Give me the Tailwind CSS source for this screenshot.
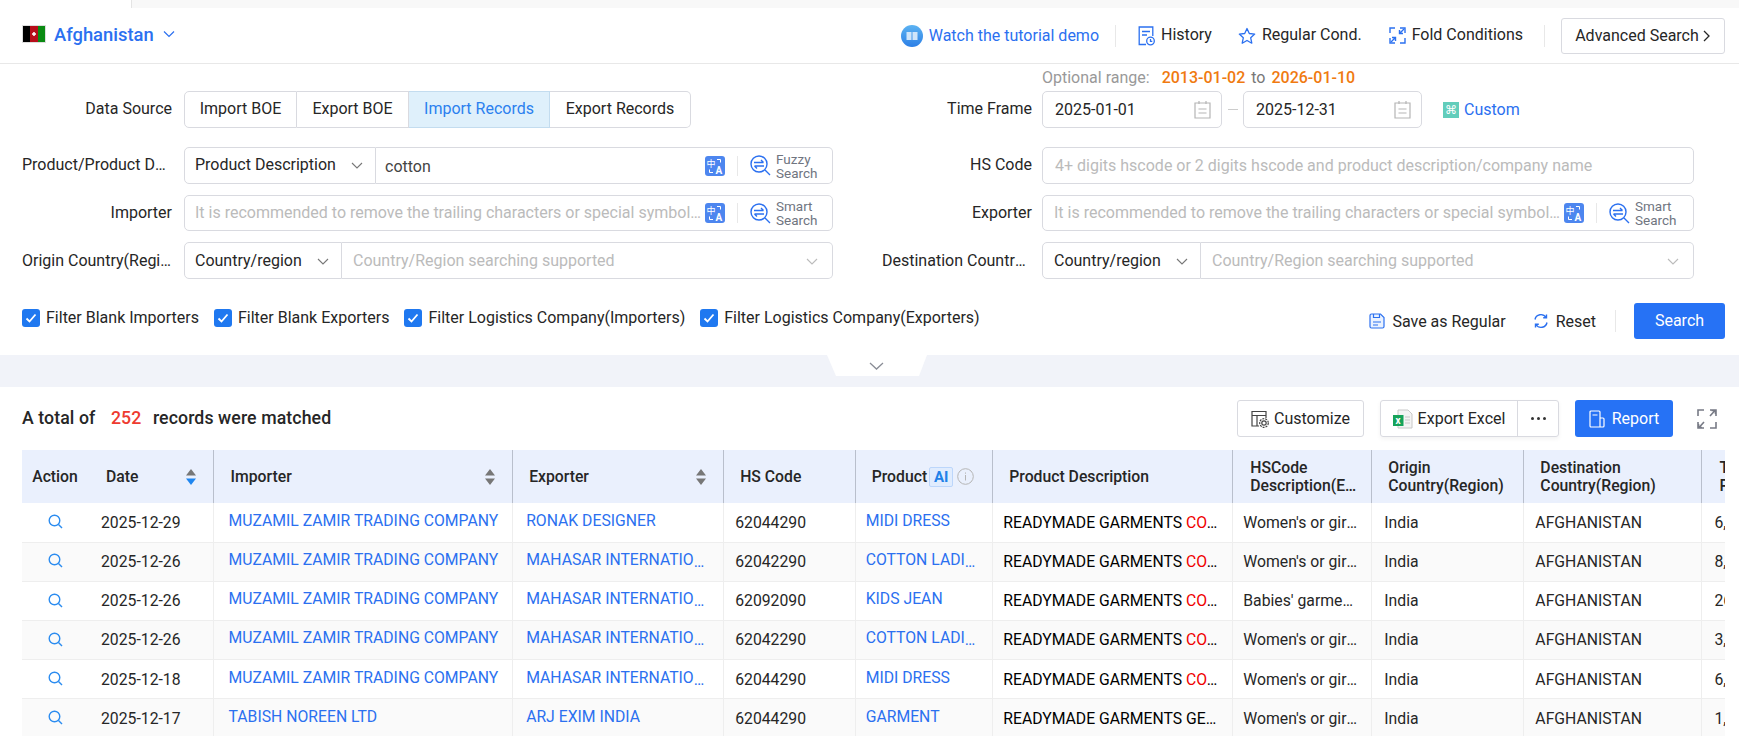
<!DOCTYPE html>
<html lang="en">

<head>
  <meta charset="UTF-8" />
  <meta name="viewport" content="width=device-width, initial-scale=1.0" />
  <script src="https://cdn.jsdelivr.net/npm/@tailwindcss/browser@4"></script>
  <title>Afghanistan trade data search</title>
</head>

<body class="bg-white">
  <div class="w-[1739px] h-[736px] overflow-hidden font-['Roboto',sans-serif] text-[16px] text-[#262626]">

    <!-- top strip -->
    <div class="h-2 flex">
      <div class="w-[132px] border-r border-[#e4e4e4]"></div>
      <div class="flex-1 bg-[#f8f8f8]"></div>
    </div>

    <!-- country + top actions -->
    <div class="h-[56px] flex items-center justify-between pl-[22px] pr-[14px] border-b border-[#e8e8e8]">
      <div class="flex items-center -translate-y-px">
        <svg width="24" height="18" viewBox="0 0 24 18" class="mr-[8px]">
          <rect width="8" height="18" fill="#000" />
          <rect x="8" width="8" height="18" fill="#b70d1a" />
          <rect x="16" width="8" height="18" fill="#0a8a12" />
          <path d="M12 7v4M10 9h4" stroke="#fff" stroke-width="1.500" />
          <rect x=".5" y=".5" width="23" height="17" fill="none" stroke="#ddd" />
        </svg>
        <span class="text-[#2b70f0] text-[18.400px] font-medium">Afghanistan</span>
        <svg width="14" height="14" viewBox="0 0 14 14" class="ml-[8px]" fill="none" stroke="#2b70f0" stroke-width="1.2">
          <path d="M2 4.5l5 5 5-5" />
        </svg>
      </div>
      <div class="flex items-center">
        <svg width="22" height="22" viewBox="0 0 22 22" class="mr-[6px]">
          <defs><linearGradient id="tut" x1="0" y1="0" x2="0" y2="1"><stop offset="0" stop-color="#5cb3f2" /><stop offset="1" stop-color="#2c7fe6" /></linearGradient></defs>
          <circle cx="11" cy="11" r="11" fill="url(#tut)" />
          <path d="M5.500 7h5v8h-5zM11.500 7h5v8h-5z" fill="#cfe5fa" />
        </svg>
        <span class="text-[#2b70f0]">Watch the tutorial demo</span>
        <div class="w-px h-[22px] bg-[#e8e8e8] ml-4 mr-[22px]"></div>
        <svg width="17" height="20" viewBox="0 0 17 20" fill="none" stroke="#2b70f0" stroke-width="1.3" class="mr-[6px]">
          <path d="M8 18.5H1.2V1h13.6v9" />
          <path d="M4 5.5h8M4 9h5" />
          <circle cx="12.5" cy="15" r="3.8" />
          <path d="M12.5 13v2.3h1.8" />
        </svg>
        <span class="-translate-y-px">History</span>
        <svg width="18" height="18" viewBox="0 0 18 18" fill="none" stroke="#2b70f0" stroke-width="1.3" stroke-linejoin="round" class="ml-[26px] mr-[6px]">
          <path d="M9 1.5l2.3 5 5.4.6-4 3.7 1.1 5.4L9 13.5l-4.8 2.7 1.1-5.4-4-3.7 5.4-.6z" />
        </svg>
        <span class="-translate-y-px">Regular Cond.</span>
        <svg width="17" height="17" viewBox="0 0 17 17" fill="none" stroke="#2b70f0" stroke-width="1.4" class="ml-[27px] mr-[6px]">
          <path d="M6 1H1v5M11 16h5v-5M1 11v5h5M16 6V1h-5" />
          <path d="M15 2l-4.5 4.5M10.5 3v3.5H14M2 15l4.5-4.5M6.5 14v-3.5H3" />
        </svg>
        <span class="-translate-y-px">Fold Conditions</span>
        <div class="w-px h-[22px] bg-[#e8e8e8] ml-[21px] mr-4"></div>
        <button class="w-[164px] h-[36px] border border-[#d9dae0] rounded-[3px] flex items-center justify-center gap-[3px]">
          Advanced Search
          <svg width="9" height="12" viewBox="0 0 9 12" fill="none" stroke="#262626" stroke-width="1.3">
            <path d="M2 1l5 5-5 5" />
          </svg>
        </button>
      </div>
    </div>

    <!-- optional range -->
    <div class="h-[27px] pl-[1042px] flex items-center text-[#999]">
      Optional range:<span class="text-[#f07a10] ml-[12px] font-medium">2013-01-02</span><span class="mx-[6px] text-[#777]">to</span><span class="text-[#f07a10] font-medium">2026-01-10</span>
    </div>

    <!-- filter rows -->
    <div class="pl-[22px] grid grid-cols-[162px_649px_209px_652px] grid-rows-[45px_37px_36px_37px] gap-y-[11px]">
      <div class="h-[37px] pb-[2px] flex items-center justify-end pr-3">Data Source</div>
      <div class="h-[37px] flex">
        <div class="w-[113px] pb-[2px] border border-[#d9dae0] rounded-l-[5px] flex items-center justify-center">Import BOE</div>
        <div class="w-[112px] pb-[2px] border-y border-r border-[#d9dae0] flex items-center justify-center">Export BOE</div>
        <div class="w-[141px] pb-[2px] border-y border-r border-[#c3dcef] bg-[#dff0fb] text-[#2b80ef] flex items-center justify-center">Import Records</div>
        <div class="w-[141px] pb-[2px] border-y border-r border-[#d9dae0] rounded-r-[5px] flex items-center justify-center">Export Records</div>
      </div>
      <div class="h-[37px] pb-[1px] flex items-center justify-end pr-[10px]">Time Frame</div>
      <div class="h-[37px] flex items-center">
        <div class="w-[180px] h-full border border-[#d9dae0] rounded-[5px] flex items-center justify-between pl-3 pr-[10px]">
          2025-01-01
          <svg width="17" height="19" viewBox="0 0 17 19" fill="none" stroke="#b5b5b5" stroke-width="1.2"><path d="M1 3h15v15H1zM5 1v3M12 1v3M4.5 9h8M4.5 13h8" /></svg>
        </div>
        <div class="w-[21px] flex justify-center"><div class="w-[10px] h-px bg-[#ccc]"></div></div>
        <div class="w-[179px] h-full border border-[#d9dae0] rounded-[5px] flex items-center justify-between pl-3 pr-[10px]">
          2025-12-31
          <svg width="17" height="19" viewBox="0 0 17 19" fill="none" stroke="#b5b5b5" stroke-width="1.2"><path d="M1 3h15v15H1zM5 1v3M12 1v3M4.5 9h8M4.5 13h8" /></svg>
        </div>
        <div class="ml-[21px] w-4 h-4 bg-[#62cdbb] text-white text-[12px] leading-4 text-center font-['DejaVu_Sans',sans-serif]">⌘</div>
        <span class="ml-[5px] text-[#2b70f0]">Custom</span>
      </div>

      <div class="pb-[2px] flex items-center justify-end pr-3"><span class="w-[150px] truncate text-right">Product/Product Description</span></div>
      <div class="flex">
        <div class="w-[192px] pb-[2px] border border-[#d9dae0] rounded-l-[5px] flex items-center justify-between pl-[10px] pr-[12px]">
          Product Description
          <svg width="12" height="12" viewBox="0 0 12 12" fill="none" stroke="#777" stroke-width="1.1"><path d="M1 4l5 5 5-5" /></svg>
        </div>
        <div class="flex-1 border-y border-r border-[#d9dae0] rounded-r-[5px] flex items-center">
          <span class="pl-[9px] flex-1 text-[#444] translate-y-px">cotton</span>
          <svg width="20" height="20" viewBox="0 0 20 20"><rect width="20" height="20" rx="3" fill="#4d86ef" /><text x="1.500" y="10.500" font-size="9" fill="#fff" font-family="Noto Sans CJK SC">中</text><text x="10.500" y="18" font-size="10" font-weight="700" fill="#fff" font-family="Roboto">A</text><path d="M12 3.500h3.500v3M8 16.500H4.500v-3" fill="none" stroke="#fff" /></svg>
          <div class="w-px h-[20px] bg-[#e8e8e8] mx-[12px]"></div>
          <svg width="21" height="21" viewBox="0 0 21 21" fill="none" stroke="#2b70f0" stroke-width="1.4"><circle cx="9" cy="9" r="8" /><path d="M15 15l5 5M4 7.500h9.500M4.500 11H14M11 5l2.500 2.500M7 13.500L4.500 11" /></svg>
          <span class="w-[61px] pl-[5px] text-[13.500px] leading-[14px] text-[#70757f]">Fuzzy Search</span>
        </div>
      </div>
      <div class="pb-[2px] flex items-center justify-end pr-[10px]">HS Code</div>
      <div class="border border-[#d9dae0] rounded-[5px] flex items-center pl-3 text-[#bbb]">4+ digits hscode or 2 digits hscode and product description/company name</div>

      <div class="flex items-center justify-end pr-3">Importer</div>
      <div class="border border-[#d9dae0] rounded-[5px] flex items-center">
        <span class="pl-[10px] pr-[4px] w-[520px] truncate text-[#bbb]">It is recommended to remove the trailing characters or special symbols from the name</span>
        <svg width="20" height="20" viewBox="0 0 20 20"><rect width="20" height="20" rx="3" fill="#4d86ef" /><text x="1.500" y="10.500" font-size="9" fill="#fff" font-family="Noto Sans CJK SC">中</text><text x="10.500" y="18" font-size="10" font-weight="700" fill="#fff" font-family="Roboto">A</text><path d="M12 3.500h3.500v3M8 16.500H4.500v-3" fill="none" stroke="#fff" /></svg>
        <div class="w-px h-[20px] bg-[#e8e8e8] mx-[12px]"></div>
        <svg width="21" height="21" viewBox="0 0 21 21" fill="none" stroke="#2b70f0" stroke-width="1.4"><circle cx="9" cy="9" r="8" /><path d="M15 15l5 5M4 7.500h9.500M4.500 11H14M11 5l2.500 2.500M7 13.500L4.500 11" /></svg>
        <span class="w-[61px] pl-[5px] text-[13.500px] leading-[14px] text-[#70757f]">Smart Search</span>
      </div>
      <div class="flex items-center justify-end pr-[10px]">Exporter</div>
      <div class="border border-[#d9dae0] rounded-[5px] flex items-center">
        <span class="pl-[11px] pr-[4px] w-[521px] truncate text-[#bbb]">It is recommended to remove the trailing characters or special symbols from the name</span>
        <svg width="20" height="20" viewBox="0 0 20 20"><rect width="20" height="20" rx="3" fill="#4d86ef" /><text x="1.500" y="10.500" font-size="9" fill="#fff" font-family="Noto Sans CJK SC">中</text><text x="10.500" y="18" font-size="10" font-weight="700" fill="#fff" font-family="Roboto">A</text><path d="M12 3.500h3.500v3M8 16.500H4.500v-3" fill="none" stroke="#fff" /></svg>
        <div class="w-px h-[20px] bg-[#e8e8e8] mx-[12px]"></div>
        <svg width="21" height="21" viewBox="0 0 21 21" fill="none" stroke="#2b70f0" stroke-width="1.4"><circle cx="9" cy="9" r="8" /><path d="M15 15l5 5M4 7.500h9.500M4.500 11H14M11 5l2.500 2.500M7 13.500L4.500 11" /></svg>
        <span class="w-[62px] pl-[5px] text-[13.500px] leading-[14px] text-[#70757f]">Smart Search</span>
      </div>

      <div class="flex items-center justify-end pr-3"><span class="w-[150px] truncate text-right">Origin Country(Region)</span></div>
      <div class="flex">
        <div class="w-[158px] border border-[#d9dae0] rounded-l-[5px] flex items-center justify-between pl-[10px] pr-[12px]">
          Country/region
          <svg width="12" height="12" viewBox="0 0 12 12" fill="none" stroke="#777" stroke-width="1.1"><path d="M1 4l5 5 5-5" /></svg>
        </div>
        <div class="flex-1 border-y border-r border-[#d9dae0] rounded-r-[5px] flex items-center justify-between pl-[11px] pr-[14px] text-[#bbb]">
          Country/Region searching supported
          <svg width="12" height="12" viewBox="0 0 12 12" fill="none" stroke="#bbb" stroke-width="1.1"><path d="M1 4l5 5 5-5" /></svg>
        </div>
      </div>
      <div class="flex items-center justify-end pr-[10px]"><span class="w-[150px] truncate text-right">Destination Country(Region)</span></div>
      <div class="flex">
        <div class="w-[159px] border border-[#d9dae0] rounded-l-[5px] flex items-center justify-between pl-[11px] pr-[12px]">
          Country/region
          <svg width="12" height="12" viewBox="0 0 12 12" fill="none" stroke="#777" stroke-width="1.1"><path d="M1 4l5 5 5-5" /></svg>
        </div>
        <div class="flex-1 border-y border-r border-[#d9dae0] rounded-r-[5px] flex items-center justify-between pl-[11px] pr-[14px] text-[#bbb]">
          Country/Region searching supported
          <svg width="12" height="12" viewBox="0 0 12 12" fill="none" stroke="#bbb" stroke-width="1.1"><path d="M1 4l5 5 5-5" /></svg>
        </div>
      </div>
    </div>

    <!-- checkboxes + search -->
    <div class="mt-[24px] h-[36px] pl-[22px] pr-[14px] flex justify-between">
      <div class="flex h-[30px] items-center gap-[15px]">
        <label class="flex items-center gap-[6px]"><span class="w-[18px] h-[18px] rounded-[3px] bg-[#1f78f0] flex items-center justify-center"><svg width="12" height="12" viewBox="0 0 12 12" fill="none" stroke="#fff" stroke-width="1.8"><path d="M1.5 6.5l3 3 6-7" /></svg></span>Filter Blank Importers</label>
        <label class="flex items-center gap-[6px]"><span class="w-[18px] h-[18px] rounded-[3px] bg-[#1f78f0] flex items-center justify-center"><svg width="12" height="12" viewBox="0 0 12 12" fill="none" stroke="#fff" stroke-width="1.8"><path d="M1.5 6.5l3 3 6-7" /></svg></span>Filter Blank Exporters</label>
        <label class="flex items-center gap-[6px]"><span class="w-[18px] h-[18px] rounded-[3px] bg-[#1f78f0] flex items-center justify-center"><svg width="12" height="12" viewBox="0 0 12 12" fill="none" stroke="#fff" stroke-width="1.8"><path d="M1.5 6.5l3 3 6-7" /></svg></span>Filter Logistics Company(Importers)</label>
        <label class="flex items-center gap-[6px]"><span class="w-[18px] h-[18px] rounded-[3px] bg-[#1f78f0] flex items-center justify-center"><svg width="12" height="12" viewBox="0 0 12 12" fill="none" stroke="#fff" stroke-width="1.8"><path d="M1.5 6.5l3 3 6-7" /></svg></span>Filter Logistics Company(Exporters)</label>
      </div>
      <div class="flex items-center">
        <svg width="16" height="16" viewBox="0 0 16 16" fill="none" stroke="#2b70f0" stroke-width="1.2" class="mr-[7px]"><path d="M1 2.500A1.500 1.500 0 0 1 2.500 1h9L15 4.500v9a1.500 1.500 0 0 1-1.500 1.500h-11A1.500 1.500 0 0 1 1 13.500z" fill="#eaf2ff" /><path d="M4.500 1v3.500h6V1M4 9h8M4 12h5" /></svg>
        <span class="translate-y-px">Save as Regular</span>
        <svg width="16" height="16" viewBox="0 0 16 16" fill="none" stroke="#2b70f0" stroke-width="1.4" class="ml-[27px] mr-[7px]"><path d="M2 6.500A6 6 0 0 1 13 4.500M14 9.500A6 6 0 0 1 3 11.500M13.500 1.500v3.300h-3.300M2.500 14.500v-3.300h3.300" /></svg>
        <span class="translate-y-px">Reset</span>
        <div class="w-px h-[22px] bg-[#e8e8e8] ml-[19px] mr-[18px]"></div>
        <button class="w-[91px] h-[36px] rounded-[3px] bg-[#2672f5] text-white">Search</button>
      </div>
    </div>

    <!-- collapse band -->
    <div class="relative mt-[16px] h-[32px] bg-[#f1f3f9]">
      <svg width="100" height="21" viewBox="0 0 100 21" class="absolute left-[827px] top-0">
        <polygon points="0,0 100,0 92,21 9,21" fill="#fff" />
        <path d="M43 8l6.500 6 6.500-6" fill="none" stroke="#8a8d96" stroke-width="1.300" />
      </svg>
    </div>

    <!-- result toolbar -->
    <div class="h-[63px] pl-[22px] pr-[22px] flex items-center justify-between">
      <div class="font-medium text-[17.700px] tracking-[0.1px]">A total of <span class="text-[#ee3b30] ml-[11px] mr-[7px]">252</span> records were matched</div>
      <div class="flex items-center">
        <button class="w-[127px] h-[37px] border border-[#d9dae0] rounded-[3px] flex items-center justify-center gap-[5px]">
          <svg width="18" height="18" viewBox="0 0 18 18" fill="none" stroke="#444" stroke-width="1.200"><path d="M8 16H1V1.500h14V8M1 5.500h14M6 5.500V16" /><circle cx="13" cy="13" r="2.200" /><circle cx="13" cy="13" r="4.300" stroke-dasharray="2 1" /></svg>
          Customize
        </button>
        <div class="ml-4 w-[179px] h-[37px] border border-[#d9dae0] rounded-[3px] flex shadow-[0_2px_4px_rgba(0,0,0,0.05)]">
          <div class="w-[137px] flex items-center justify-center gap-[5px] border-r border-[#d9dae0]">
            <svg width="20" height="20" viewBox="0 0 20 20"><path d="M5 1h10l4 4v14H5z" fill="#f4f4f4" stroke="#c8c8c8" /><path d="M12 8h5M12 11h5M12 14h5" stroke="#c8c8c8" /><rect y="6" width="10.500" height="11" fill="#17a35a" /><text x="2.500" y="14.500" font-size="10" font-weight="700" fill="#fff" font-family="Roboto">x</text></svg>
            Export Excel
          </div>
          <div class="flex-1 flex items-center justify-center gap-[3px]">
            <span class="w-[3px] h-[3px] rounded-full bg-[#333]"></span><span class="w-[3px] h-[3px] rounded-full bg-[#333]"></span><span class="w-[3px] h-[3px] rounded-full bg-[#333]"></span>
          </div>
        </div>
        <button class="ml-[16px] w-[98px] h-[37px] rounded-[3px] bg-[#2672f5] text-white flex items-center justify-center gap-[7px]">
          <svg width="16" height="18" viewBox="0 0 16 18" fill="none" stroke="#fff" stroke-width="1.200"><path d="M1 2a1 1 0 0 1 1-1h8a1 1 0 0 1 1 1v15H2a1 1 0 0 1-1-1zM11 8h3a1 1 0 0 1 1 1v7a1 1 0 0 1-1 1h-3M3.500 5h5" /></svg>
          Report
        </button>
        <svg width="20" height="20" viewBox="0 0 20 20" fill="none" stroke="#777a85" stroke-width="1.600" class="ml-6">
          <path d="M7 1H1v6M13 1h6v6M1 13v6h6M19 13v6h-6M13 7l5-5.500M7 13l-5 5.500M14.500 1.500H18.500V5M1.500 15v3.500H5" />
        </svg>
      </div>
    </div>

    <!-- results table -->
    <div class="ml-[22px] w-[1703px] overflow-hidden text-[15.750px]">
      <table class="table-fixed border-collapse w-[1903px]">
        <colgroup>
          <col class="w-[66px]" />
          <col class="w-[125px]" />
          <col class="w-[299.5px]" />
          <col class="w-[211px]" />
          <col class="w-[131.5px]" />
          <col class="w-[137.5px]" />
          <col class="w-[240px]" />
          <col class="w-[139px]" />
          <col class="w-[152px]" />
          <col class="w-[178px]" />
          <col class="w-[223px]" />
        </colgroup>
        <thead>
          <tr class="h-[53px] bg-[#eaf0fd] text-left font-medium leading-[18px]">
            <th class="font-medium text-center shadow-[3px_0_4px_rgba(0,0,0,0.1)] relative">Action</th>
            <th class="font-medium pl-[18px] pr-[17px] border-r border-[#b9bfcc]"><div class="flex items-center justify-between">Date
              <svg width="10" height="16" viewBox="0 0 10 16"><path d="M5 0l5 6.500H0z" fill="#777" /><path d="M5 16l5-6.500H0z" fill="#1f86f0" /></svg></div></th>
            <th class="font-medium pl-[17px] pr-[17px] border-r border-[#b9bfcc]"><div class="flex items-center justify-between">Importer
              <svg width="10" height="16" viewBox="0 0 10 16" fill="#777"><path d="M5 0l5 6.500H0zM5 16l5-6.500H0z" /></svg></div></th>
            <th class="font-medium pl-[16px] pr-[17px] border-r border-[#b9bfcc]"><div class="flex items-center justify-between">Exporter
              <svg width="10" height="16" viewBox="0 0 10 16" fill="#777"><path d="M5 0l5 6.500H0zM5 16l5-6.500H0z" /></svg></div></th>
            <th class="font-medium pl-[16px] border-r border-[#b9bfcc]">HS Code</th>
            <th class="font-medium pl-[16px] border-r border-[#b9bfcc]"><div class="flex items-center">Product
              <span class="ml-[2px] w-[24px] h-[20px] border border-[#bcd6fb] bg-[#e0ecfe] rounded-[2px] text-[#2181e8] text-[15px] font-bold leading-[18px] text-center">AI</span>
              <svg width="17" height="17" viewBox="0 0 17 17" fill="none" stroke="#b5b5b5" class="ml-[4px]"><circle cx="8.500" cy="8.500" r="7.800" /><path d="M8.500 7v5.500M8.500 4.500v1.200" /></svg></div></th>
            <th class="font-medium pl-[16px] border-r border-[#b9bfcc]">Product Description</th>
            <th class="font-medium pl-[17px] pr-3 border-r border-[#b9bfcc]">HSCode<div class="truncate">Description(English)</div></th>
            <th class="font-medium pl-[16px] border-r border-[#b9bfcc]">Origin<br />Country(Region)</th>
            <th class="font-medium pl-[16px] border-r border-[#b9bfcc]">Destination<br />Country(Region)</th>
            <th class="font-medium pl-[17px]">Total<br />Price</th>
          </tr>
        </thead>
        <tbody id="rows"></tbody>
      </table>
    </div>
  </div>

  <script>
    const rows = [
      ['2025-12-29', 'MUZAMIL ZAMIR TRADING COMPANY', 'RONAK DESIGNER', '62044290', 'MIDI DRESS', 'COTTON', "Women's or girls' dresses", '6,120'],
      ['2025-12-26', 'MUZAMIL ZAMIR TRADING COMPANY', 'MAHASAR INTERNATIONAL', '62042290', 'COTTON LADIES SUIT', 'COTTON', "Women's or girls' ensembles", '8,340'],
      ['2025-12-26', 'MUZAMIL ZAMIR TRADING COMPANY', 'MAHASAR INTERNATIONAL', '62092090', 'KIDS JEAN', 'COTTON', "Babies' garments and clothing", '26,500'],
      ['2025-12-26', 'MUZAMIL ZAMIR TRADING COMPANY', 'MAHASAR INTERNATIONAL', '62042290', 'COTTON LADIES SUIT', 'COTTON', "Women's or girls' ensembles", '3,450'],
      ['2025-12-18', 'MUZAMIL ZAMIR TRADING COMPANY', 'MAHASAR INTERNATIONAL', '62044290', 'MIDI DRESS', 'COTTON', "Women's or girls' dresses", '6,210'],
      ['2025-12-17', 'TABISH NOREEN LTD', 'ARJ EXIM INDIA', '62044290', 'GARMENT', '', "Women's or girls' dresses", '1,875'],
    ];

    document.getElementById('rows').innerHTML = rows.map((r, i) => `
      <tr class="h-[39.2px] border-b border-[#eeeeee] ${i % 2 ? 'bg-[#fafafa]' : 'bg-white'}">
        <td class="text-center shadow-[3px_0_4px_rgba(0,0,0,0.1)] relative">
          <svg width="15" height="15" viewBox="0 0 15 15" fill="none" stroke="#2b8cf0" stroke-width="1.400" class="inline-block -mt-1"><circle cx="6.500" cy="6.500" r="5.300" /><path d="M10.500 10.500l3.500 3.500" /></svg>
        </td>
        <td class="pl-[13px] border-r border-[#eeeeee]">${r[0]}</td>
        <td class="pl-[15px] pr-2 truncate border-r border-[#eeeeee] text-[#2b70f0]"><span class="relative -top-[2px]">${r[1]}</span></td>
        <td class="pl-[13px] pr-[14px] truncate border-r border-[#eeeeee] text-[#2b70f0]"><span class="relative -top-[2px]">${r[2]}</span></td>
        <td class="pl-[11px] border-r border-[#eeeeee]">${r[3]}</td>
        <td class="pl-[10px] pr-3 truncate border-r border-[#eeeeee] text-[#2b70f0]"><span class="relative -top-[2px]">${r[4]}</span></td>
        <td class="pl-[10px] pr-3 truncate border-r border-[#eeeeee] text-black">READYMADE GARMENTS ${r[5] ? `<span class="text-[#f00000]">${r[5]}</span> LADIES` : 'GENTS WEAR ITEMS'}</td>
        <td class="pl-[10px] pr-[14px] truncate border-r border-[#eeeeee]">${r[6]}</td>
        <td class="pl-[12px] border-r border-[#eeeeee]">India</td>
        <td class="pl-[11px] border-r border-[#eeeeee]">AFGHANISTAN</td>
        <td class="pl-[12px]">${r[7]}</td>
      </tr>`).join('');
  </script>
</body>

</html>
